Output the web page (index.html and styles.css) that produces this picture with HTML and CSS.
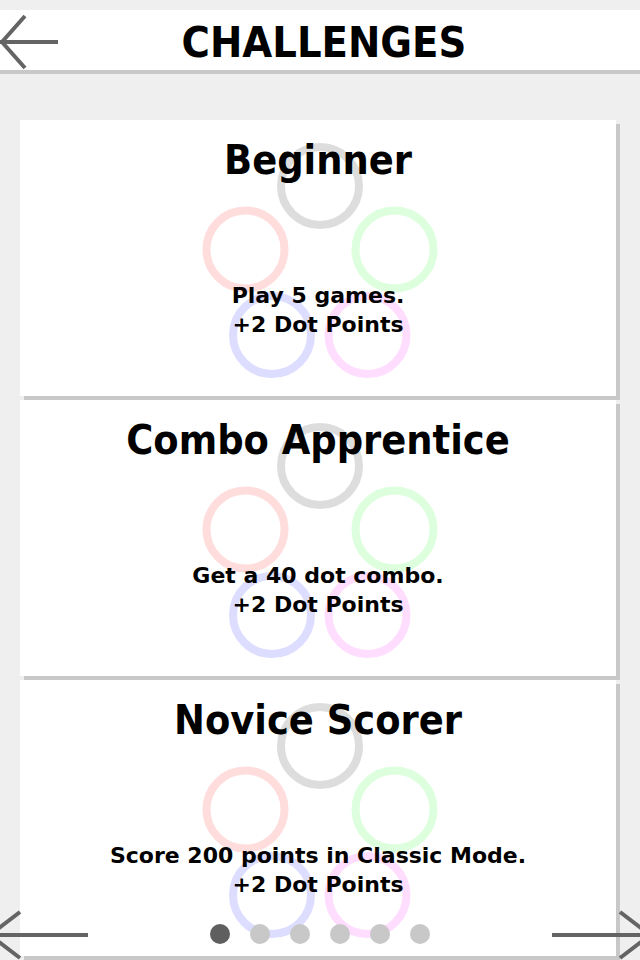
FILE: index.html
```html
<!DOCTYPE html>
<html lang="en">
<head>
<meta charset="utf-8">
<title>Challenges</title>
<link rel="stylesheet" href="styles.css">
</head>
<body>
<header class="topbar">
  <button class="back" aria-label="Back">
    <svg width="60" height="60" viewBox="0 0 60 60"><path d="M0 32H58M25 6L2 32L25 58" fill="none" stroke="#646464" stroke-width="4"/></svg>
  </button>
  <h1 class="title">CHALLENGES</h1>
  <span class="spacer"></span>
</header>
<main class="list">
  <article class="card">
    <svg class="rings" viewBox="0 0 596 276" width="596" height="276" aria-hidden="true">
      <circle cx="300" cy="66" r="39" class="ring gray"/>
      <circle cx="225.5" cy="129.5" r="39" class="ring red"/>
      <circle cx="374.5" cy="129.5" r="39" class="ring green"/>
      <circle cx="252" cy="215" r="39" class="ring blue"/>
      <circle cx="347.5" cy="215" r="39" class="ring pink"/>
    </svg>
    <h2 class="card-title">Beginner</h2>
    <p class="card-desc">Play 5 games.<br>+2 Dot Points</p>
  </article>
  <article class="card">
    <svg class="rings" viewBox="0 0 596 276" width="596" height="276" aria-hidden="true">
      <circle cx="300" cy="66" r="39" class="ring gray"/>
      <circle cx="225.5" cy="129.5" r="39" class="ring red"/>
      <circle cx="374.5" cy="129.5" r="39" class="ring green"/>
      <circle cx="252" cy="215" r="39" class="ring blue"/>
      <circle cx="347.5" cy="215" r="39" class="ring pink"/>
    </svg>
    <h2 class="card-title">Combo Apprentice</h2>
    <p class="card-desc">Get a 40 dot combo.<br>+2 Dot Points</p>
  </article>
  <article class="card">
    <svg class="rings" viewBox="0 0 596 276" width="596" height="276" aria-hidden="true">
      <circle cx="300" cy="66" r="39" class="ring gray"/>
      <circle cx="225.5" cy="129.5" r="39" class="ring red"/>
      <circle cx="374.5" cy="129.5" r="39" class="ring green"/>
      <circle cx="252" cy="215" r="39" class="ring blue"/>
      <circle cx="347.5" cy="215" r="39" class="ring pink"/>
    </svg>
    <h2 class="card-title">Novice Scorer</h2>
    <p class="card-desc">Score 200 points in Classic Mode.<br>+2 Dot Points</p>
  </article>
</main>
<nav class="pager">
  <button class="nav-arrow" aria-label="Previous">
    <svg width="88" height="50" viewBox="0 0 88 50"><path d="M0 25H88M20 2L-10 25L20 48" fill="none" stroke="#646464" stroke-width="4"/></svg>
  </button>
  <div class="dots">
    <span class="dot active"></span>
    <span class="dot"></span>
    <span class="dot"></span>
    <span class="dot"></span>
    <span class="dot"></span>
    <span class="dot"></span>
  </div>
  <button class="nav-arrow" aria-label="Next">
    <svg width="88" height="50" viewBox="0 0 88 50"><path d="M0 25H88M68 2L98 25L68 48" fill="none" stroke="#646464" stroke-width="4"/></svg>
  </button>
</nav>
</body>
</html>
```
FILE: styles.css
```css
* { box-sizing: border-box; }
html, body { margin: 0; padding: 0; }
body {
  width: 640px;
  height: 960px;
  overflow: hidden;
  position: relative;
  background: #efefef;
  color: #000;
  font-family: "DejaVu Sans", sans-serif;
}
.topbar {
  margin-top: 10px;
  height: 64px;
  background: #fff;
  border-bottom: 4px solid #c8c8c8;
  display: grid;
  grid-template-columns: 60px 1fr 60px;
  align-items: start;
}
.back {
  display: block;
  width: 60px;
  height: 60px;
  padding: 0;
  border: 0;
  background: none;
}
.back svg { display: block; }
.title {
  margin: 0;
  padding: 4px 0 0 8px;
  text-align: center;
  font-family: "DejaVu Sans Condensed", "DejaVu Sans", sans-serif;
  font-stretch: condensed;
  font-weight: bold;
  font-size: 43px;
  line-height: 56px;
}
.list {
  padding: 46px 0 0 20px;
  display: flex;
  flex-direction: column;
  gap: 4px;
}
.card {
  position: relative;
  width: 596px;
  height: 276px;
  background: #fff;
  box-shadow: 4px 4px 0 #c8c8c8;
  padding-top: 16px;
  text-align: center;
}
.rings {
  position: absolute;
  left: 0;
  top: 0;
}
.ring { fill: none; stroke-width: 8; }
.gray { stroke: #dddddd; }
.red { stroke: #ffdddd; }
.green { stroke: #ddffdd; }
.blue { stroke: #ddddff; }
.pink { stroke: #ffddff; }
.card-title {
  position: relative;
  margin: 0;
  font-family: "DejaVu Sans Condensed", "DejaVu Sans", sans-serif;
  font-stretch: condensed;
  font-weight: bold;
  font-size: 41px;
  line-height: 48px;
}
.card-desc {
  position: relative;
  margin: 97px 0 0;
  font-weight: bold;
  font-size: 22px;
  line-height: 29px;
}
.pager {
  position: absolute;
  left: 0;
  top: 910px;
  width: 640px;
  height: 50px;
  display: flex;
  justify-content: space-between;
  align-items: center;
}
.nav-arrow {
  display: block;
  padding: 0;
  border: 0;
  background: none;
  width: 88px;
  height: 50px;
}
.nav-arrow svg { display: block; }
.dots {
  display: flex;
  gap: 20px;
  margin-top: -2px;
}
.dot {
  width: 20px;
  height: 20px;
  border-radius: 50%;
  background: #c8c8c8;
}
.dot.active { background: #5f5f5f; }
```
